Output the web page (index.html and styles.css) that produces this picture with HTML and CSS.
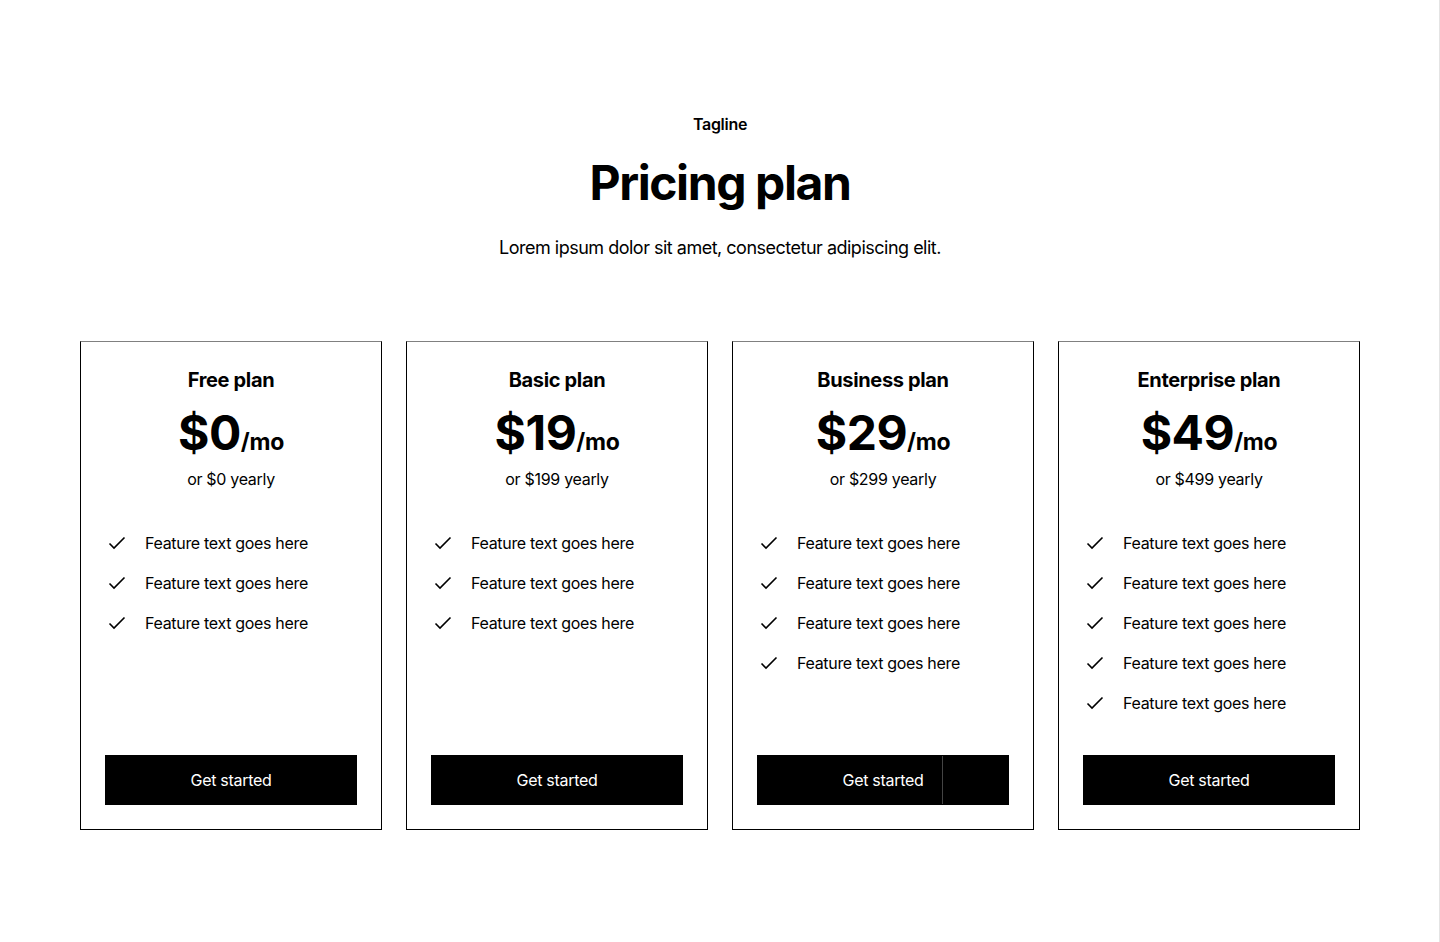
FILE: index.html
```html
<!DOCTYPE html>
<html lang="en">
<head>
    <meta charset="UTF-8">
    <meta name="viewport" content="width=device-width, initial-scale=1.0">
    <title>Pricing plan</title>
    <link rel="stylesheet" href="styles.css">
</head>
<body>
    <div class="page">

        <!-- Cabeçalho -->
        <div class="intro">
            <p class="tagline">Tagline</p>
            <h1>Pricing plan</h1>
            <p class="lead">Lorem ipsum dolor sit amet, consectetur adipiscing elit.</p>
        </div>

        <!-- Planos -->
        <div class="plans">

            <div class="plan">
                <h2>Free plan</h2>
                <div class="price">$0<span>/mo</span></div>
                <p class="yearly">or $0 yearly</p>
                <ul class="features">
                    <li><svg viewBox="0 0 24 24"><path d="M4.5 12.5l4.5 4.5 10.5-10.5"/></svg>Feature text goes here</li>
                    <li><svg viewBox="0 0 24 24"><path d="M4.5 12.5l4.5 4.5 10.5-10.5"/></svg>Feature text goes here</li>
                    <li><svg viewBox="0 0 24 24"><path d="M4.5 12.5l4.5 4.5 10.5-10.5"/></svg>Feature text goes here</li>
                </ul>
                <button>Get started</button>
            </div>

            <div class="plan">
                <h2>Basic plan</h2>
                <div class="price">$19<span>/mo</span></div>
                <p class="yearly">or $199 yearly</p>
                <ul class="features">
                    <li><svg viewBox="0 0 24 24"><path d="M4.5 12.5l4.5 4.5 10.5-10.5"/></svg>Feature text goes here</li>
                    <li><svg viewBox="0 0 24 24"><path d="M4.5 12.5l4.5 4.5 10.5-10.5"/></svg>Feature text goes here</li>
                    <li><svg viewBox="0 0 24 24"><path d="M4.5 12.5l4.5 4.5 10.5-10.5"/></svg>Feature text goes here</li>
                </ul>
                <button>Get started</button>
            </div>

            <div class="plan">
                <h2>Business plan</h2>
                <div class="price">$29<span>/mo</span></div>
                <p class="yearly">or $299 yearly</p>
                <ul class="features">
                    <li><svg viewBox="0 0 24 24"><path d="M4.5 12.5l4.5 4.5 10.5-10.5"/></svg>Feature text goes here</li>
                    <li><svg viewBox="0 0 24 24"><path d="M4.5 12.5l4.5 4.5 10.5-10.5"/></svg>Feature text goes here</li>
                    <li><svg viewBox="0 0 24 24"><path d="M4.5 12.5l4.5 4.5 10.5-10.5"/></svg>Feature text goes here</li>
                    <li><svg viewBox="0 0 24 24"><path d="M4.5 12.5l4.5 4.5 10.5-10.5"/></svg>Feature text goes here</li>
                </ul>
                <button class="split">Get started</button>
            </div>

            <div class="plan">
                <h2>Enterprise plan</h2>
                <div class="price">$49<span>/mo</span></div>
                <p class="yearly">or $499 yearly</p>
                <ul class="features">
                    <li><svg viewBox="0 0 24 24"><path d="M4.5 12.5l4.5 4.5 10.5-10.5"/></svg>Feature text goes here</li>
                    <li><svg viewBox="0 0 24 24"><path d="M4.5 12.5l4.5 4.5 10.5-10.5"/></svg>Feature text goes here</li>
                    <li><svg viewBox="0 0 24 24"><path d="M4.5 12.5l4.5 4.5 10.5-10.5"/></svg>Feature text goes here</li>
                    <li><svg viewBox="0 0 24 24"><path d="M4.5 12.5l4.5 4.5 10.5-10.5"/></svg>Feature text goes here</li>
                    <li><svg viewBox="0 0 24 24"><path d="M4.5 12.5l4.5 4.5 10.5-10.5"/></svg>Feature text goes here</li>
                </ul>
                <button>Get started</button>
            </div>

        </div>
    </div>
</body>
</html>
```

FILE: styles.css
```css
/* Estilo da página */
body {
    font-family: Inter, "Noto Sans", sans-serif;
    background-color: #fff;
    color: #000;
    margin: 0;
}

.page {
    min-height: 100vh;
    padding: 112px 80px 0;
    box-sizing: border-box;
    box-shadow: inset -1px 0 0 #e4e4e4;
}

/* Cabeçalho */
.intro {
    text-align: center;
    margin-bottom: 80px;
}

.tagline {
    font-size: 16px;
    font-weight: 600;
    line-height: 24px;
    letter-spacing: -0.3px;
    margin: 0 0 18px;
}

.intro h1 {
    font-size: 48px;
    font-weight: 700;
    line-height: 1.2;
    letter-spacing: -1.4px;
    margin: 0 0 22px;
}

.lead {
    font-size: 18px;
    line-height: 27px;
    letter-spacing: -0.5px;
    margin: 0;
}

/* Planos */
.plans {
    display: grid;
    grid-template-columns: repeat(4, 1fr);
    gap: 24px;
}

.plan {
    display: flex;
    flex-direction: column;
    padding: 24px;
    border: 1px solid #000;
    border-top-color: #808080;
    text-align: center;
}

.plan h2 {
    font-size: 20px;
    font-weight: 700;
    line-height: 28px;
    letter-spacing: -0.35px;
    margin: 0 0 8px;
}

.price {
    font-size: 48px;
    font-weight: 700;
    line-height: 62px;
    letter-spacing: -0.5px;
}

.price span {
    font-size: 23px;
    line-height: 1;
    letter-spacing: -0.3px;
}

.yearly {
    font-size: 16px;
    line-height: 24px;
    letter-spacing: -0.3px;
    margin: 3px 0 0;
}

.features {
    list-style: none;
    padding: 0;
    margin: 40px 0 40px;
    display: flex;
    flex-direction: column;
    gap: 16px;
    text-align: left;
}

.features li {
    display: flex;
    align-items: center;
    gap: 16px;
    font-size: 16px;
    line-height: 24px;
    letter-spacing: -0.32px;
}

.features svg {
    width: 24px;
    height: 24px;
    flex-shrink: 0;
    fill: none;
    stroke: #000;
    stroke-width: 1.6;
}

/* Botões */
button {
    margin-top: auto;
    background-color: #000;
    color: #fff;
    border: 1px solid #000;
    padding: 12px 24px;
    font-family: inherit;
    font-size: 16px;
    line-height: 24px;
    letter-spacing: -0.3px;
    cursor: pointer;
}

.split {
    position: relative;
}

.split::after {
    content: "";
    position: absolute;
    top: 0;
    bottom: 0;
    left: 184px;
    width: 1px;
    background-color: #444;
}
```
